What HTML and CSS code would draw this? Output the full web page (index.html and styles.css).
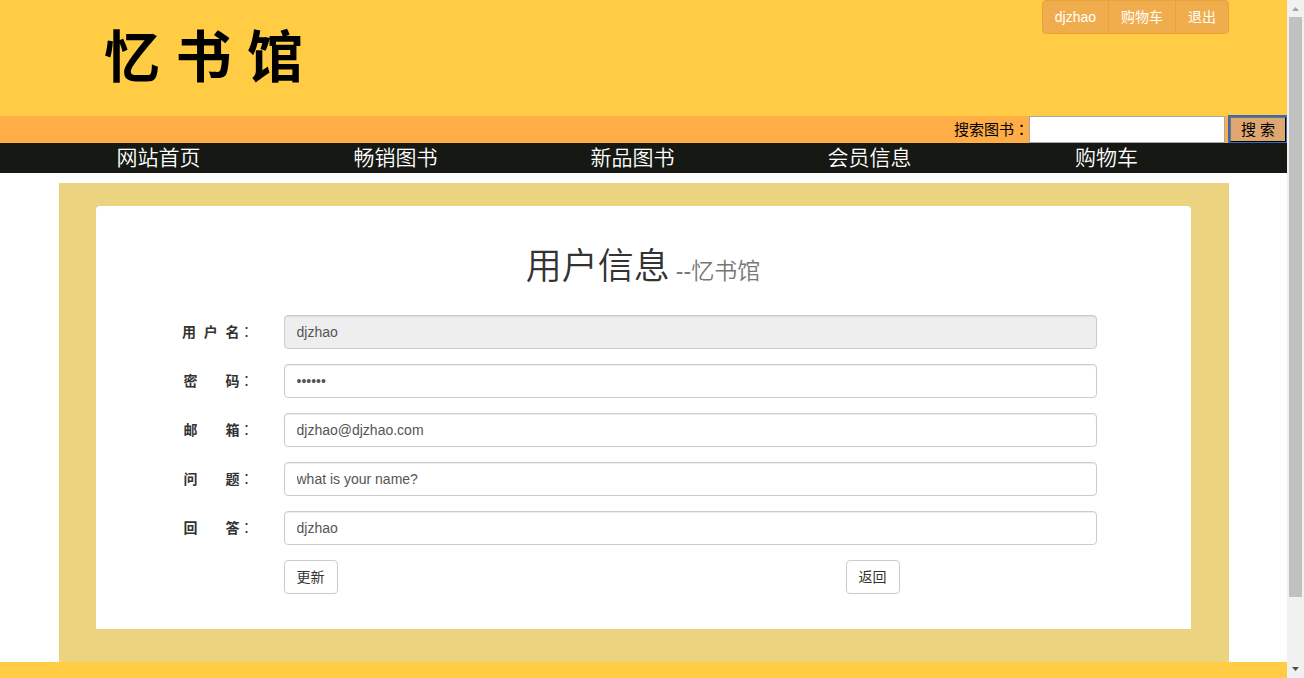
FILE: index.html
```html
<!DOCTYPE html>
<html lang="zh-CN">
<head>
<meta charset="utf-8">
<title>用户信息 - 忆书馆</title>
<link rel="stylesheet" href="styles.css">
</head>
<body>
<div class="page">
  <header class="header">
    <div class="logo">忆 书 馆</div>
    <div class="btn-group">
      <a class="btn btn-warning" href="#user">djzhao</a>
      <a class="btn btn-warning" href="#cart">购物车</a>
      <a class="btn btn-warning" href="#logout">退出</a>
    </div>
  </header>
  <form class="search">
    <label for="keyword">搜索图书<span class="colon" lang="zh-TW">：</span></label>
    <input class="search-input" id="keyword" type="text">
    <button class="search-btn" type="button">搜 索</button>
  </form>
  <nav class="nav">
    <a href="#home">网站首页</a>
    <a href="#hot">畅销图书</a>
    <a href="#new">新品图书</a>
    <a href="#member">会员信息</a>
    <a href="#cart">购物车</a>
  </nav>
  <main class="container">
    <section class="panel">
      <h1 class="title">用户信息 <small>--忆书馆</small></h1>
      <form class="form">
        <label for="username">用&nbsp; 户&nbsp; 名<span class="colon" lang="zh-TW">：</span></label>
        <input class="control" id="username" type="text" value="djzhao" disabled>
        <label for="password">密&emsp;&emsp;码<span class="colon" lang="zh-TW">：</span></label>
        <input class="control" id="password" type="password" value="123456">
        <label for="email">邮&emsp;&emsp;箱<span class="colon" lang="zh-TW">：</span></label>
        <input class="control" id="email" type="text" value="djzhao@djzhao.com">
        <label for="question">问&emsp;&emsp;题<span class="colon" lang="zh-TW">：</span></label>
        <input class="control" id="question" type="text" value="what is your name?">
        <label for="answer">回&emsp;&emsp;答<span class="colon" lang="zh-TW">：</span></label>
        <input class="control" id="answer" type="text" value="djzhao">
        <div class="actions">
          <div><button class="btn btn-default" type="button">更新</button></div>
          <div><button class="btn btn-default" type="button">返回</button></div>
        </div>
      </form>
    </section>
  </main>
  <footer class="footer"></footer>
</div>
<div class="scrollbar" aria-hidden="true">
  <svg class="arrow" viewBox="0 0 17 17"><path d="M5 11h7L8.500 7z" fill="#a3a3a3"/></svg>
  <div class="track"><div class="thumb"></div></div>
  <svg class="arrow" viewBox="0 0 17 17"><path d="M5 6h7L8.500 10z" fill="#505050"/></svg>
</div>
</body>
</html>
```
FILE: styles.css
```css
* { box-sizing: border-box; }

body {
  margin: 0;
  min-height: 100vh;
  display: grid;
  grid-template-columns: 1fr 17px;
  background: #fff;
  color: #333;
  font: 14px/20px "Liberation Sans", "Noto Sans CJK SC", sans-serif;
}

input, button { font: inherit; color: inherit; }
a { text-decoration: none; }

.page {
  display: flex;
  flex-direction: column;
  min-width: 0;
}

.colon {
  font-family: "Noto Sans CJK TC", sans-serif;
  font-weight: 400;
  line-height: 1;
}

/* Header */
.header {
  display: flex;
  justify-content: space-between;
  align-items: flex-start;
  height: 116px;
  padding: 0 58px 0 104px;
  background: #ffcc44;
}

.logo {
  padding-top: 20px;
  color: #000;
  font-family: "STXingkai", "Liberation Sans", "Noto Sans CJK SC", cursive;
  font-size: 56px;
  font-weight: 700;
  line-height: 76px;
}

.btn {
  display: inline-block;
  height: 34px;
  padding: 6px 12px;
  border: 1px solid transparent;
  border-radius: 4px;
  white-space: nowrap;
}

.btn-group { display: flex; }

.btn-warning {
  margin-left: -1px;
  border-color: #eea236;
  border-radius: 0;
  background: #f0ad4e;
  color: #fff;
}
.btn-warning:first-child { border-radius: 4px 0 0 4px; }
.btn-warning:last-child { border-radius: 0 4px 4px 0; }

.btn-default {
  border-color: #ccc;
  background: #fff;
}

/* Search bar */
.search {
  display: flex;
  justify-content: flex-end;
  align-items: center;
  height: 27px;
  background: #ffad46;
  color: #000;
  font-size: 15px;
}

.search-input {
  width: 196px;
  height: 27px;
  margin-right: 4px;
  border: 1px solid #a9a9a9;
  background: #fff;
}

.search-btn {
  width: 58px;
  height: 27px;
  padding: 0;
  border: 2px outset #222;
  background: #dea671;
  outline: 2px solid #3a6ab0;
  outline-offset: -1px;
}

/* Navigation */
.nav {
  display: grid;
  grid-template-columns: repeat(5, 1fr);
  padding: 0 62px 0 40px;
  background: #161813;
  font-size: 21px;
  line-height: 30px;
  text-align: center;
}
.nav a { color: #fff; font-weight: 350; }

/* User information */
.container {
  width: 1170px;
  max-width: 100%;
  margin: 10px auto 0;
  padding: 23px 38px 33px 37px;
  background: #ecd380;
}

.panel {
  padding: 40px 94px 35px 4px;
  border-radius: 4px 4px 0 0;
  background: #fff;
}

.title {
  margin: 0 -90px 27px 0;
  font-size: 36px;
  font-weight: 350;
  line-height: 42px;
  text-align: center;
}
.title small {
  margin-left: -4px;
  color: #777;
  font-size: 23px;
  line-height: 1;
}

.form {
  display: grid;
  grid-template-columns: 154px 1fr;
  gap: 15px 30px;
  align-items: center;
}
.form label {
  font-weight: 700;
  text-align: right;
}

.control {
  width: 100%;
  height: 34px;
  padding: 6px 12px;
  border: 1px solid #ccc;
  border-radius: 4px;
  background: #fff;
  box-shadow: inset 0 1px 1px rgba(0, 0, 0, .075);
  color: #555;
}
.control:disabled { background: #eee; }

.actions {
  grid-column: 2;
  display: grid;
  grid-template-columns: 2fr 1fr;
  margin-right: -30px;
}

.footer {
  flex: 1;
  min-height: 16px;
  background: #ffcc44;
}

/* Scroll bar */
.scrollbar {
  display: flex;
  flex-direction: column;
  background: #f1f1f1;
}
.arrow {
  width: 17px;
  height: 17px;
}
.track {
  flex: 1;
  padding: 0 2px;
}
.thumb {
  height: 90%;
  background: #c1c1c1;
}
```
